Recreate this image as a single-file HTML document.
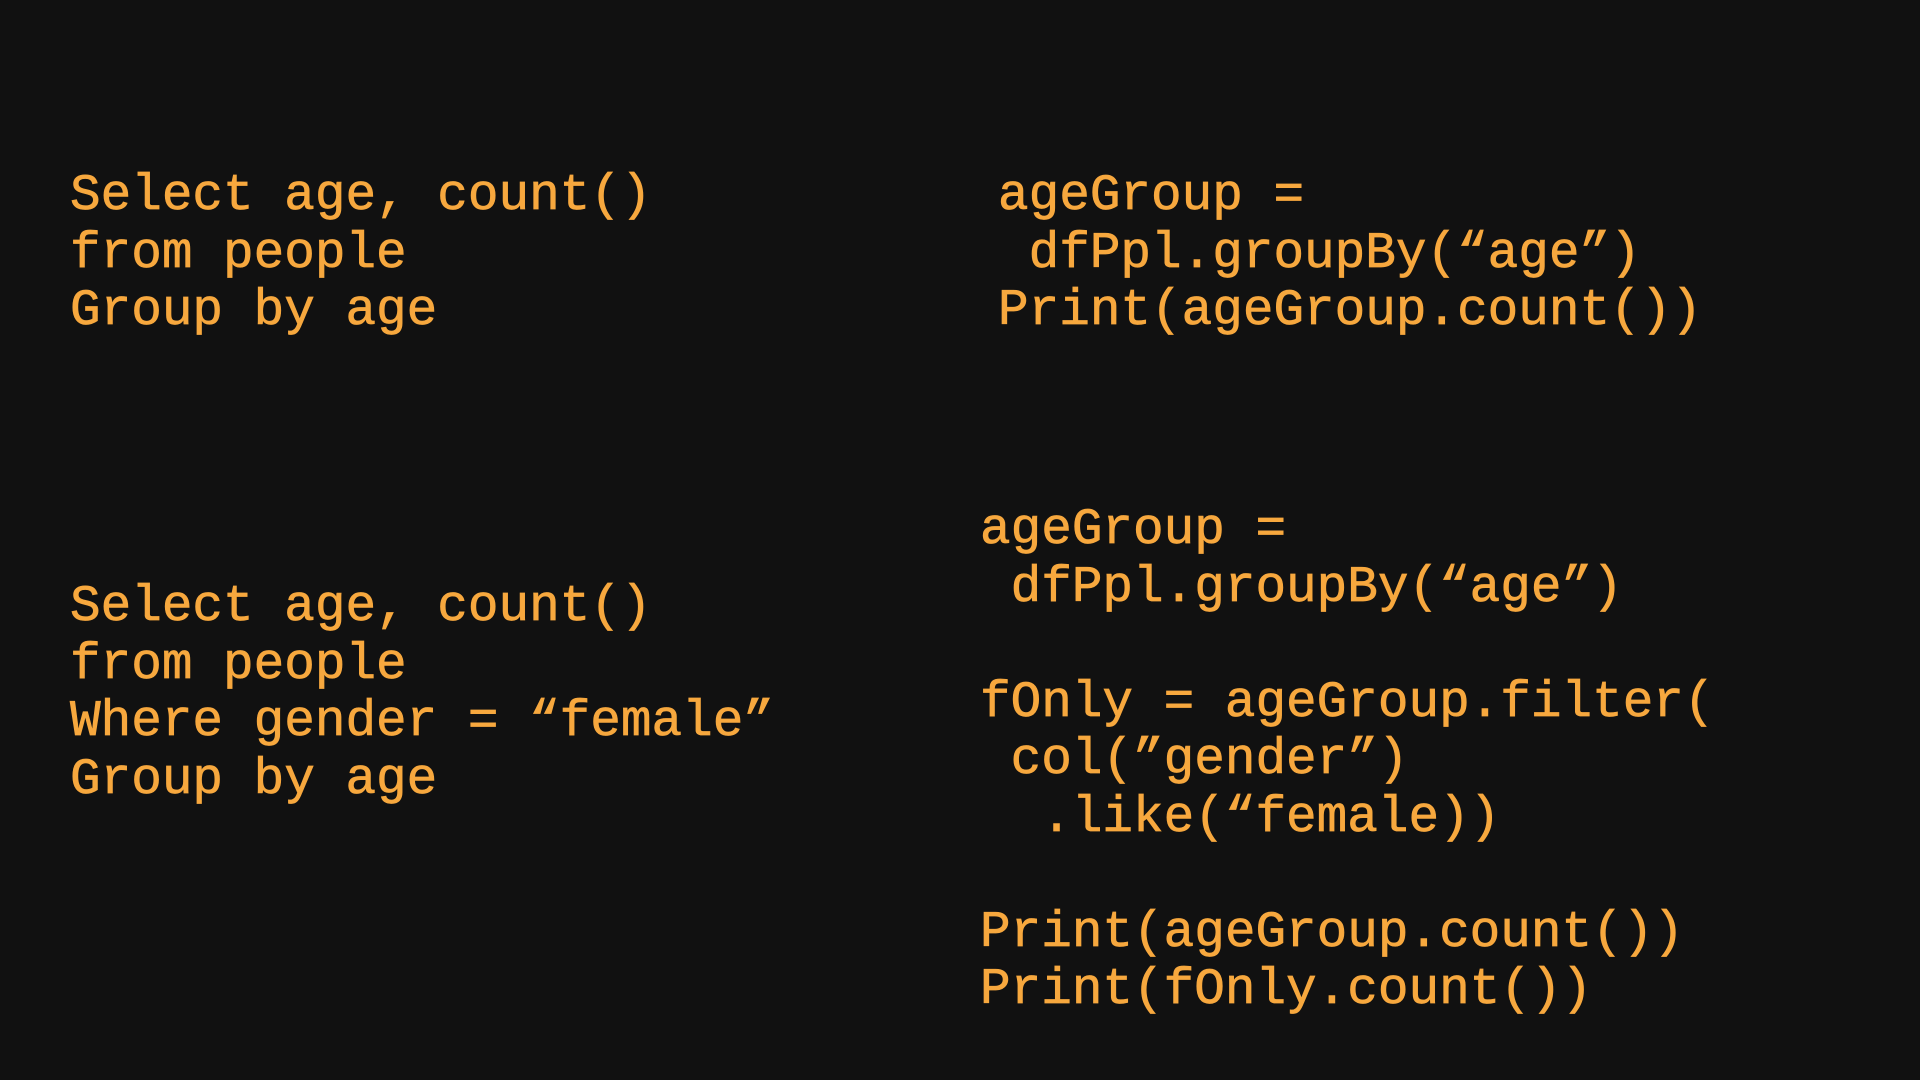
<!DOCTYPE html>
<html><head><meta charset="utf-8"><style>
html,body{margin:0;padding:0;}
body{width:1920px;height:1080px;background:#111111;position:relative;overflow:hidden;}
pre{position:absolute;margin:0;font-family:"Liberation Mono",monospace;font-size:51px;line-height:57.5px;color:#f7a83e;-webkit-text-stroke:0.7px #f7a83e;}
</style></head><body>
<pre style="left:70px;top:168px">Select age, count()
from people
Group by age</pre>
<pre style="left:70px;top:579px">Select age, count()
from people
Where gender = “female”
Group by age</pre>
<pre style="left:998px;top:168px">ageGroup =
 dfPpl.groupBy(“age”)
Print(ageGroup.count())</pre>
<pre style="left:980px;top:502px">ageGroup =
 dfPpl.groupBy(“age”)

fOnly = ageGroup.filter(
 col(”gender”)
  .like(“female))

Print(ageGroup.count())
Print(fOnly.count())</pre>
</body></html>
